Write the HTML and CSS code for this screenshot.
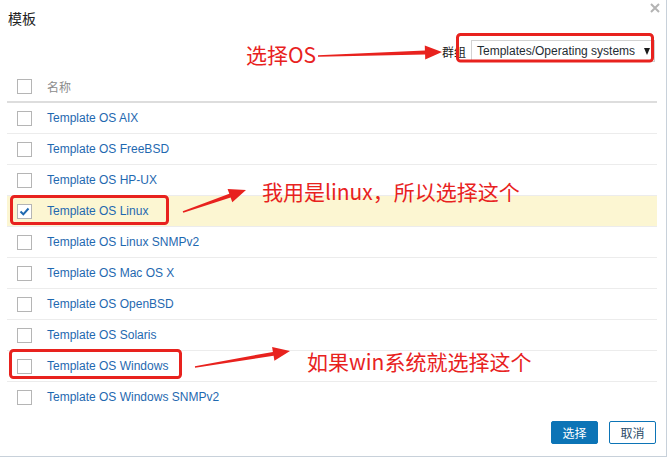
FILE: index.html
```html
<!DOCTYPE html>
<html lang="zh">
<head>
<meta charset="utf-8">
<title>模板</title>
<link rel="stylesheet" href="styles.css">
</head>
<body>
<div class="dialog">
  <div class="dlg-head">
    <span class="dlg-title">模板</span>
    <button class="dlg-close" aria-label="关闭">
      <svg width="10" height="10" viewBox="0 0 10 10"><path d="M1 1L9 9M9 1L1 9" stroke="#b4b4b4" stroke-width="2"/></svg>
    </button>
  </div>
  <div class="filter">
    <span class="filter-label">群组</span>
    <div class="select"><span>Templates/Operating systems</span><span class="caret"></span></div>
  </div>
  <div class="list">
    <div class="row head-row"><span class="cb"></span><span class="name-h">名称</span></div>
    <div class="row"><span class="cb"></span><a class="link">Template OS AIX</a></div>
    <div class="row"><span class="cb"></span><a class="link">Template OS FreeBSD</a></div>
    <div class="row"><span class="cb"></span><a class="link">Template OS HP-UX</a></div>
    <div class="row selected"><span class="cb checked"><svg width="13" height="13" viewBox="0 0 13 13"><path d="M2.5 6.5L5.3 9.3L10.5 3.5" fill="none" stroke="#1f69b0" stroke-width="2"/></svg></span><a class="link">Template OS Linux</a></div>
    <div class="row"><span class="cb"></span><a class="link">Template OS Linux SNMPv2</a></div>
    <div class="row"><span class="cb"></span><a class="link">Template OS Mac OS X</a></div>
    <div class="row"><span class="cb"></span><a class="link">Template OS OpenBSD</a></div>
    <div class="row"><span class="cb"></span><a class="link">Template OS Solaris</a></div>
    <div class="row"><span class="cb"></span><a class="link">Template OS Windows</a></div>
    <div class="row last"><span class="cb"></span><a class="link">Template OS Windows SNMPv2</a></div>
  </div>
  <div class="footer">
    <button class="btn btn-primary">选择</button>
    <button class="btn btn-alt">取消</button>
  </div>

  <svg class="marks" width="668" height="457" viewBox="0 0 668 457">
    <g fill="none" stroke="#e8221e" stroke-width="3">
      <rect x="457.5" y="34.5" width="195" height="26.5" rx="3"/>
      <rect x="11.5" y="196.5" width="156" height="27" rx="3"/>
      <rect x="10.5" y="350.5" width="170" height="27" rx="3"/>
    </g>
    <g fill="#e8221e">
      <polygon points="318,55.2 424.9,50.5 424.8,45.6 442,52 425.2,59.5 425.1,54.6 318,56.8"/>
      <polygon points="182.7,211.3 229.3,193.7 227.6,189 246,190 232.3,202.2 230.6,197.5 183.3,212.7"/>
      <polygon points="194.9,366.2 272.9,351.9 272.1,346.9 290,351 274.4,360.7 273.6,355.8 195.1,367.8"/>
    </g>
  </svg>
  <div class="note note-os">选择OS</div>
  <div class="note note-linux">我用是linux，所以选择这个</div>
  <div class="note note-win">如果win系统就选择这个</div>
</div>
</body>
</html>
```

FILE: styles.css
```css
html, body {
  margin: 0;
  padding: 0;
  background: #ffffff;
}
body {
  font-family: "Liberation Sans", Arial, "Noto Sans CJK SC", sans-serif;
  font-size: 12px;
  color: #1f2c33;
}
.dialog {
  position: relative;
  width: 666px;
  height: 456px;
  border-right: 1px solid #c8d1da;
  border-bottom: 1px solid #c8d1da;
  background: #fff;
}
.dlg-head {
  height: 30px;
  padding: 8px 0 0 8px;
  box-sizing: border-box;
}
.dlg-title {
  display: block;
  font-family: "Noto Sans CJK SC", sans-serif;
  font-size: 14px;
  line-height: 20px;
  color: #222;
}
.dlg-close {
  position: absolute;
  top: 3px;
  right: 6px;
  width: 10px;
  height: 10px;
  padding: 0;
  border: 0;
  background: none;
  line-height: 0;
}
.filter {
  display: flex;
  justify-content: flex-end;
  align-items: center;
  gap: 5px;
  margin-top: 10px;
  padding-right: 11px;
  height: 22px;
}
.filter-label {
  font-family: "Noto Sans CJK SC", sans-serif;
  font-size: 12px;
  color: #222;
}
.select {
  width: 184px;
  height: 22px;
  box-sizing: border-box;
  border: 1px solid #d2d2d2;
  display: flex;
  align-items: center;
  justify-content: space-between;
  padding: 0 4px 0 5px;
  color: #1f2c33;
}
.caret {
  width: 0;
  height: 0;
  border-left: 3.5px solid transparent;
  border-right: 3.5px solid transparent;
  border-top: 7px solid #1a1a1a;
}
.list {
  margin: 9px 0 0 7px;
  width: 650px;
}
.row {
  height: 30px;
  display: flex;
  align-items: center;
  gap: 15px;
  padding-left: 10px;
  border-bottom: 1px solid #ececec;
}
.row.last {
  border-bottom: 0;
}
.head-row {
  border-bottom: 2px solid #dddddd;
}
.row.selected {
  background: #fcf6d2;
}
.cb {
  width: 15px;
  height: 15px;
  box-sizing: border-box;
  border: 1px solid #b5b5b5;
  background: #fff;
  display: flex;
  align-items: center;
  justify-content: center;
  flex: none;
}
.name-h {
  font-family: "Noto Sans CJK SC", sans-serif;
  color: #8c8c8c;
  font-size: 12px;
}
.link {
  color: #1f69b0;
  text-decoration: none;
}
.footer {
  display: flex;
  justify-content: flex-end;
  gap: 11px;
  margin-top: 9px;
  padding-right: 10px;
}
.btn {
  width: 47px;
  height: 23px;
  box-sizing: border-box;
  font-family: "Noto Sans CJK SC", sans-serif;
  font-size: 12px;
  padding: 0;
  border-radius: 2px;
  line-height: 1;
}
.btn-primary {
  background: #0c74b6;
  border: 1px solid #0c74b6;
  color: #fff;
}
.btn-alt {
  background: #fff;
  border: 1px solid #0c74b6;
  color: #2b4a66;
}
.marks {
  position: absolute;
  left: 0;
  top: 0;
  pointer-events: none;
}
.note {
  position: absolute;
  font-family: "Noto Sans CJK SC", sans-serif;
  font-size: 21px;
  line-height: 21px;
  color: #e8221e;
  white-space: nowrap;
}
.note-os {
  left: 246px;
  top: 44px;
}
.note-linux {
  left: 262px;
  top: 181px;
}
.note-win {
  left: 307px;
  top: 351px;
}
```
